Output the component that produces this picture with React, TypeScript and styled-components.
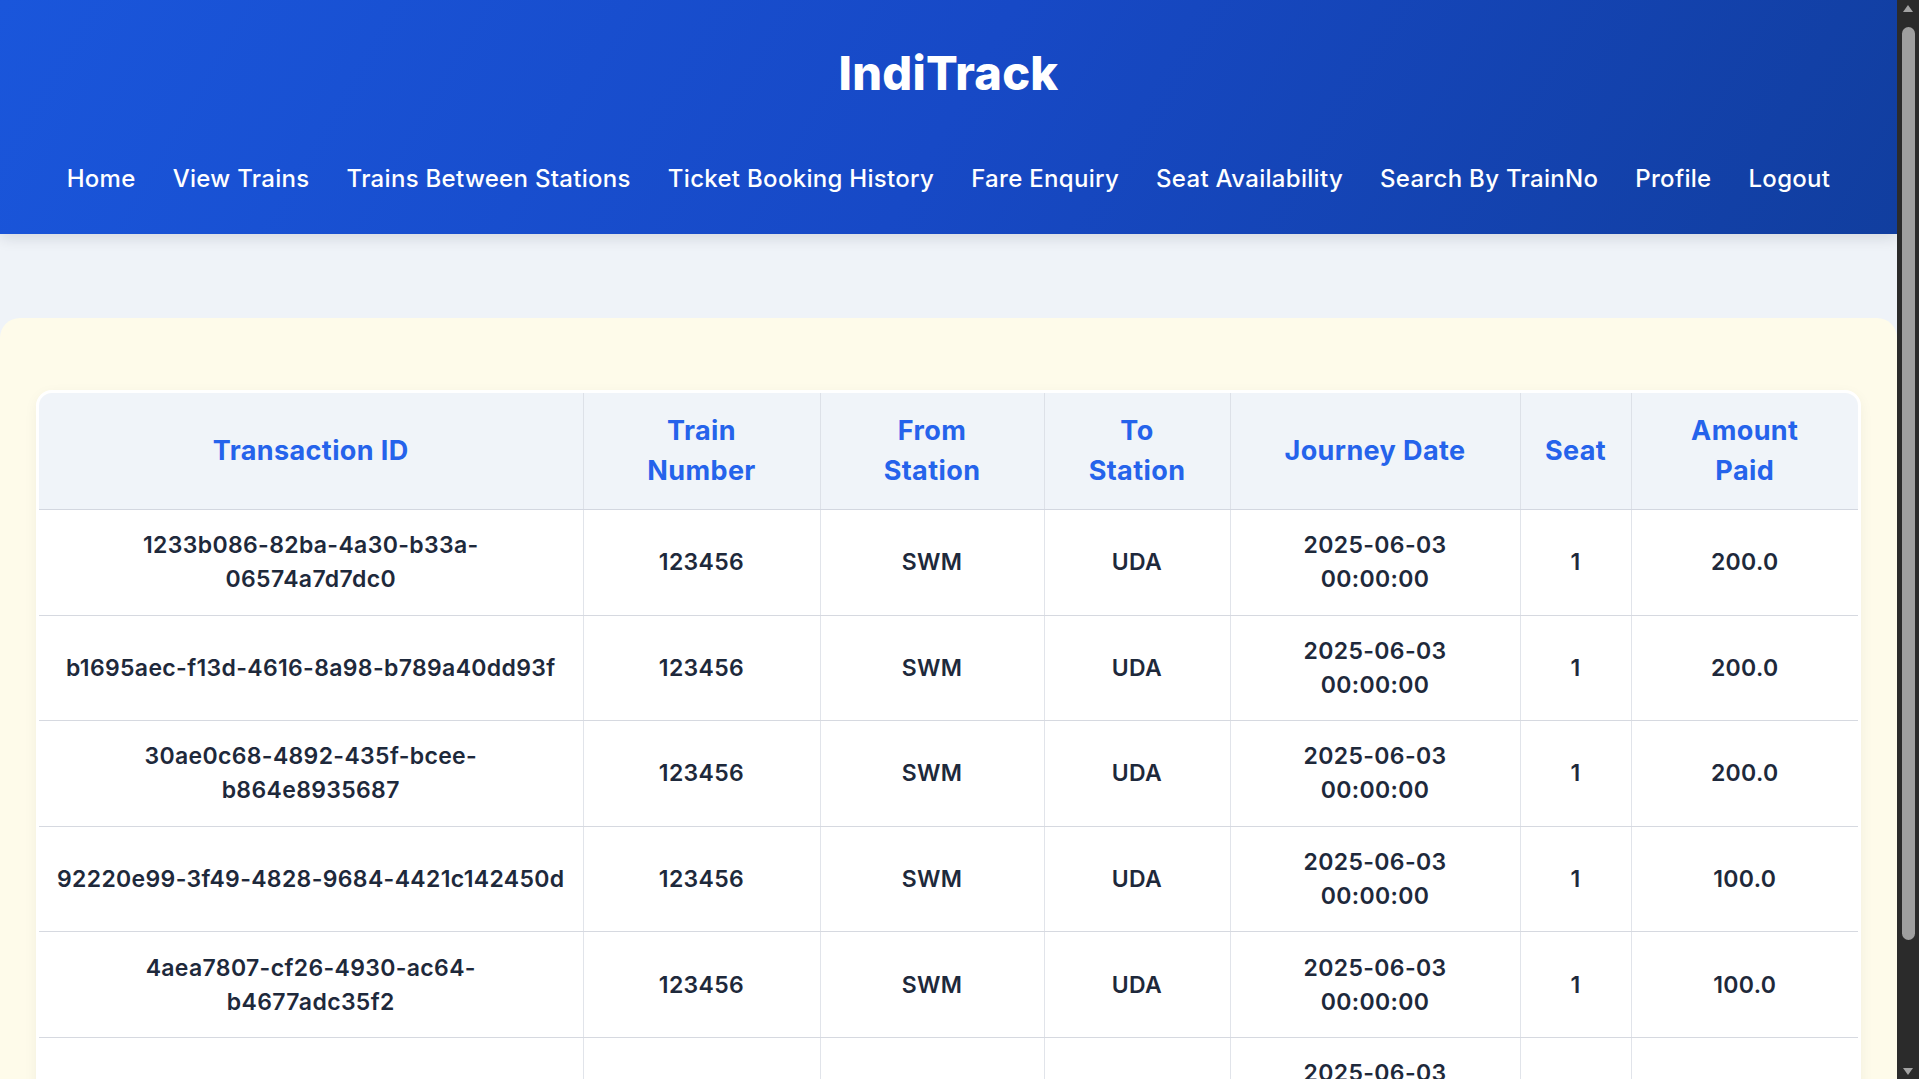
import React from "react";
import styled, { createGlobalStyle } from "styled-components";

const GlobalStyle = createGlobalStyle`
  html, body {
    margin: 0;
    padding: 0;
  }
  body {
    background: #eff3f8;
    font-family: Inter, "Open Sans", "Noto Sans", sans-serif;
    color: #1e293b;
  }
`;

const Page = styled.div`
  display: flex;
  height: 100vh;
  overflow: hidden;
`;

const Viewport = styled.div`
  flex: 1;
  min-width: 0;
  overflow: hidden;
  background: #eff3f8;
`;

const ScrollTrack = styled.div`
  width: 22px;
  flex: none;
  background: #2b2b2b;
  display: flex;
  flex-direction: column;
  align-items: center;
`;

const ScrollArrow = styled.div`
  height: 17px;
  width: 100%;
  display: flex;
  align-items: center;
  justify-content: center;
  flex: none;
`;

const ScrollThumb = styled.div`
  width: 13px;
  height: 913px;
  margin-top: 10px;
  margin-left: 1px;
  border-radius: 7px;
  background: #9f9f9f;
`;

const ScrollSpacer = styled.div`
  flex: 1;
`;

const Header = styled.header`
  background: linear-gradient(120deg, #1a56db 0%, #1749c6 50%, #113e9f 100%);
  padding: 44px 0 37px;
  box-shadow: 0 4px 14px rgba(15, 23, 42, 0.12);
  display: flex;
  flex-direction: column;
  align-items: center;
`;

const Title = styled.h1`
  margin: 0;
  font-size: 47px;
  line-height: 58px;
  font-weight: 800;
  color: #ffffff;
  letter-spacing: 0.2px;
`;

const Nav = styled.nav`
  margin-top: 59px;
  display: flex;
  justify-content: center;
  gap: 37px;
`;

const NavLink = styled.a`
  font-size: 24px;
  line-height: 36px;
  font-weight: 500;
  color: #ffffff;
  text-decoration: none;
  letter-spacing: 0.3px;
  cursor: pointer;
`;

const Main = styled.main`
  padding: 84px 0 40px;
`;

const Card = styled.section`
  background: #fefbea;
  border-radius: 20px;
  padding: 72px 36px 36px;
`;

const TableFrame = styled.div`
  border: 3px solid #ffffff;
  border-radius: 16px;
  overflow: hidden;
  box-shadow: 0 4px 14px rgba(15, 23, 42, 0.05);
`;

const Table = styled.table`
  width: 100%;
  border-collapse: collapse;
  table-layout: fixed;
  background: #ffffff;
`;

const HeadCell = styled.th`
  background: #f0f4f9;
  color: #2563eb;
  font-size: 27px;
  line-height: 40px;
  font-weight: 700;
  letter-spacing: 0.4px;
  padding: 18px 16px;
  text-align: center;
  vertical-align: middle;
  border-bottom: 1px solid #d3d7e0;
  border-right: 1px solid #dde1e8;
  &:last-child {
    border-right: none;
  }
`;

const BodyCell = styled.td`
  font-size: 23px;
  line-height: 34px;
  font-weight: 600;
  letter-spacing: 0.35px;
  color: #1e293b;
  padding: 18.3px 16px;
  text-align: center;
  vertical-align: middle;
  border-bottom: 1px solid #d6d9e0;
  border-right: 1px solid #e1e4ea;
  &:last-child {
    border-right: none;
  }
`;

const Line = styled.span`
  display: block;
  white-space: nowrap;
`;

type Column = { key: string; width: number; head: string[] };

const columns: Column[] = [
  { key: "id", width: 544, head: ["Transaction ID"] },
  { key: "train", width: 237, head: ["Train", "Number"] },
  { key: "from", width: 224, head: ["From", "Station"] },
  { key: "to", width: 186, head: ["To", "Station"] },
  { key: "date", width: 290, head: ["Journey Date"] },
  { key: "seat", width: 111, head: ["Seat"] },
  { key: "amount", width: 227, head: ["Amount", "Paid"] },
];

type Booking = {
  id: string[];
  train: string;
  from: string;
  to: string;
  date: string[];
  seat: string;
  amount: string;
};

const bookings: Booking[] = [
  {
    id: ["1233b086-82ba-4a30-b33a-", "06574a7d7dc0"],
    train: "123456",
    from: "SWM",
    to: "UDA",
    date: ["2025-06-03", "00:00:00"],
    seat: "1",
    amount: "200.0",
  },
  {
    id: ["b1695aec-f13d-4616-8a98-b789a40dd93f"],
    train: "123456",
    from: "SWM",
    to: "UDA",
    date: ["2025-06-03", "00:00:00"],
    seat: "1",
    amount: "200.0",
  },
  {
    id: ["30ae0c68-4892-435f-bcee-", "b864e8935687"],
    train: "123456",
    from: "SWM",
    to: "UDA",
    date: ["2025-06-03", "00:00:00"],
    seat: "1",
    amount: "200.0",
  },
  {
    id: ["92220e99-3f49-4828-9684-4421c142450d"],
    train: "123456",
    from: "SWM",
    to: "UDA",
    date: ["2025-06-03", "00:00:00"],
    seat: "1",
    amount: "100.0",
  },
  {
    id: ["4aea7807-cf26-4930-ac64-", "b4677adc35f2"],
    train: "123456",
    from: "SWM",
    to: "UDA",
    date: ["2025-06-03", "00:00:00"],
    seat: "1",
    amount: "100.0",
  },
  {
    id: ["e71f4c2a-1d3b-4f19-b1a7-11c4f1d2e1a9"],
    train: "123456",
    from: "SWM",
    to: "UDA",
    date: ["2025-06-03", "00:00:00"],
    seat: "1",
    amount: "100.0",
  },
];

const navItems = [
  "Home",
  "View Trains",
  "Trains Between Stations",
  "Ticket Booking History",
  "Fare Enquiry",
  "Seat Availability",
  "Search By TrainNo",
  "Profile",
  "Logout",
];

const Lines: React.FC<{ lines: string[] }> = ({ lines }) => (
  <>
    {lines.map((l, i) => (
      <Line key={i}>{l}</Line>
    ))}
  </>
);

const Triangle: React.FC<{ down?: boolean }> = ({ down }) => (
  <svg width="10" height="8" viewBox="0 0 10 8">
    <path d={down ? "M0 1 L10 1 L5 8 Z" : "M0 7 L10 7 L5 0 Z"} fill="#a3a3a3" />
  </svg>
);

export default function App() {
  return (
    <Page>
      <GlobalStyle />
      <Viewport>
        <Header>
          <Title>IndiTrack</Title>
          <Nav>
            {navItems.map((item) => (
              <NavLink key={item}>{item}</NavLink>
            ))}
          </Nav>
        </Header>
        <Main>
          <Card>
            <TableFrame>
              <Table>
                <colgroup>
                  {columns.map((c) => (
                    <col key={c.key} style={{ width: c.width }} />
                  ))}
                </colgroup>
                <thead>
                  <tr>
                    {columns.map((c) => (
                      <HeadCell key={c.key}>
                        <Lines lines={c.head} />
                      </HeadCell>
                    ))}
                  </tr>
                </thead>
                <tbody>
                  {bookings.map((b, i) => (
                    <tr key={i}>
                      <BodyCell>
                        <Lines lines={b.id} />
                      </BodyCell>
                      <BodyCell>{b.train}</BodyCell>
                      <BodyCell>{b.from}</BodyCell>
                      <BodyCell>{b.to}</BodyCell>
                      <BodyCell>
                        <Lines lines={b.date} />
                      </BodyCell>
                      <BodyCell>{b.seat}</BodyCell>
                      <BodyCell>{b.amount}</BodyCell>
                    </tr>
                  ))}
                </tbody>
              </Table>
            </TableFrame>
          </Card>
        </Main>
      </Viewport>
      <ScrollTrack>
        <ScrollArrow>
          <Triangle />
        </ScrollArrow>
        <ScrollThumb />
        <ScrollSpacer />
        <ScrollArrow>
          <Triangle down />
        </ScrollArrow>
      </ScrollTrack>
    </Page>
  );
}
